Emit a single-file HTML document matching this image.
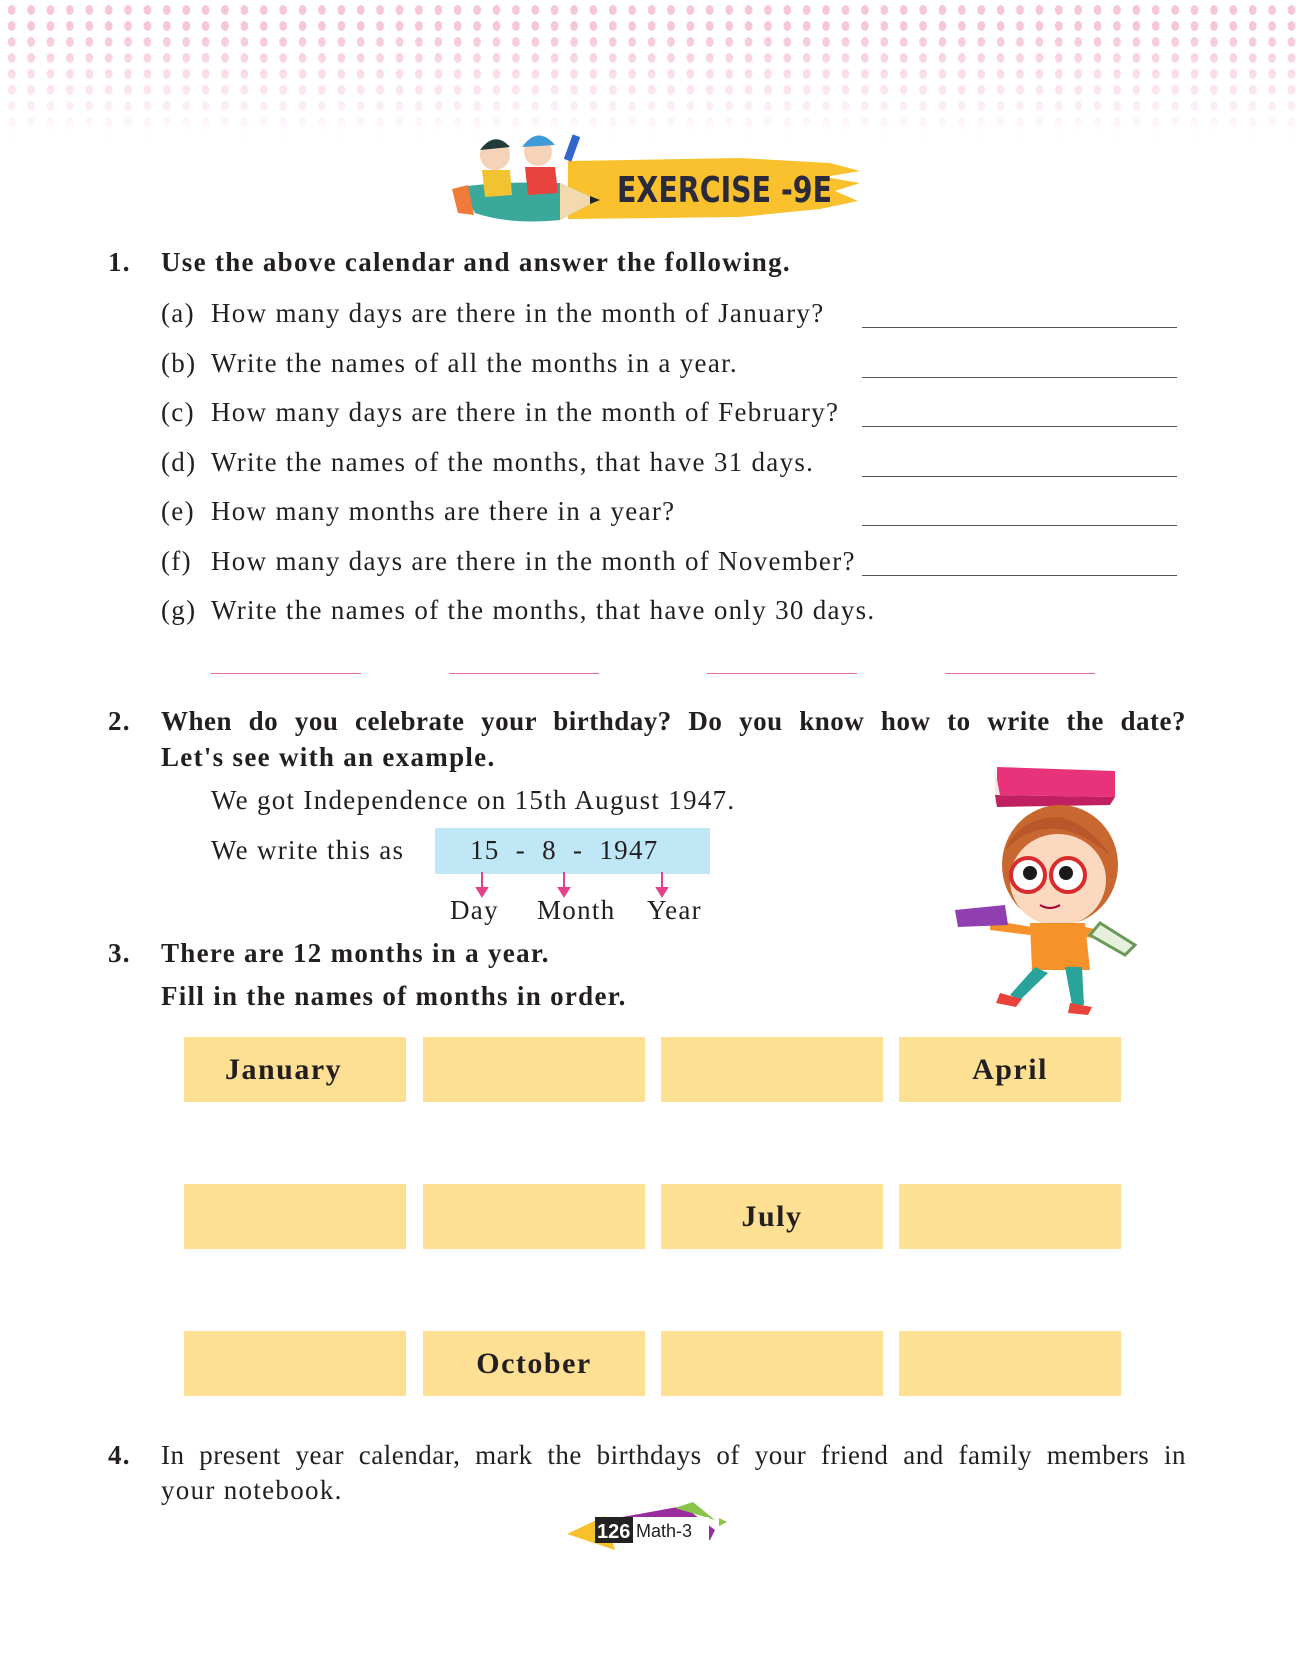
<!DOCTYPE html>
<html><head><meta charset="utf-8"><style>
body{margin:0;width:1296px;height:1656px;background:#fff;position:relative;overflow:hidden;font-family:"Liberation Serif",serif;color:#231f20}
.dots{position:absolute;left:0;top:0;width:1296px;height:140px;background-image:radial-gradient(ellipse 4px 5px at 50% 50%,#f6c6da 95%,transparent 100%);background-size:19.4px 16px;background-position:2px 2px;-webkit-mask-image:linear-gradient(#000 20%,rgba(0,0,0,0) 100%);mask-image:linear-gradient(#000 20%,rgba(0,0,0,0) 100%)}
.t{position:absolute;white-space:nowrap;font-size:27px;line-height:30px;letter-spacing:1.3px}
.b{font-weight:bold}
.ln{position:absolute;height:0;border-top:1.5px solid #555;left:862px;width:315px}
.pl{position:absolute;top:673px;height:0;border-top:1.5px solid #e26aa3;width:150px}
.box{position:absolute;box-sizing:border-box;width:222px;height:65px;background:#fde094;font-weight:bold;font-size:30px;line-height:65px;text-align:center;letter-spacing:1.5px}
</style></head><body>
<div class="dots"></div>
<svg style="position:absolute;left:440px;top:125px" width="440" height="110" viewBox="0 0 440 110">
<path d="M128 36 L300 33 L390 38 L420 46 L385 52 L420 58 L395 66 L418 76 L380 84 L300 92 L128 94 Z" fill="#f9c12e"/>
<path d="M20 62 Q60 56 120 58 L158 75 L120 95 Q70 100 35 88 Z" fill="#3aa99b"/>
<path d="M120 58 L158 75 L120 95 Z" fill="#f2d9ae"/>
<path d="M150 71 L160 75 L150 79Z" fill="#222"/>
<path d="M12 64 L28 60 L34 90 L18 88Z" fill="#f07a3a"/>
<circle cx="55" cy="30" r="15" fill="#f6d2b8"/><path d="M40 25 Q55 5 70 22 Z" fill="#1f3b3a"/>
<path d="M42 45 L70 45 L72 70 L45 72Z" fill="#f2c330"/>
<circle cx="98" cy="27" r="14" fill="#f6d2b8"/><path d="M82 22 Q98 0 115 20 Z" fill="#3f9ad8"/>
<path d="M85 42 L115 42 L118 68 L88 70Z" fill="#e8443f"/>
<rect x="128" y="10" width="8" height="26" fill="#3366cc" transform="rotate(20 132 23)"/>
<text x="177" y="77" font-family="DejaVu Sans Condensed, Liberation Sans, sans-serif" font-weight="bold" font-size="36" fill="#2a2a3a" textLength="215" lengthAdjust="spacingAndGlyphs">EXERCISE -9E</text>
</svg>

<div class="t b" style="left:108px;top:247px">1.</div>
<div class="t b" style="left:161px;top:247px">Use the above calendar and answer the following.</div>

<div class="t" style="left:161px;top:298px">(a)</div><div class="t" style="left:211px;top:298px">How many days are there in the month of January?</div>
<div class="t" style="left:161px;top:348px">(b)</div><div class="t" style="left:211px;top:348px">Write the names of all the months in a year.</div>
<div class="t" style="left:161px;top:397px">(c)</div><div class="t" style="left:211px;top:397px">How many days are there in the month of February?</div>
<div class="t" style="left:161px;top:447px">(d)</div><div class="t" style="left:211px;top:447px">Write the names of the months, that have 31 days.</div>
<div class="t" style="left:161px;top:496px">(e)</div><div class="t" style="left:211px;top:496px">How many months are there in a year?</div>
<div class="t" style="left:161px;top:546px">(f)</div><div class="t" style="left:211px;top:546px">How many days are there in the month of November?</div>
<div class="t" style="left:161px;top:595px">(g)</div><div class="t" style="left:211px;top:595px">Write the names of the months, that have only 30 days.</div>

<div class="ln" style="top:327px"></div><div class="ln" style="top:377px"></div><div class="ln" style="top:426px"></div><div class="ln" style="top:476px"></div><div class="ln" style="top:525px"></div><div class="ln" style="top:575px"></div>

<div class="pl" style="left:211px"></div><div class="pl" style="left:449px"></div><div class="pl" style="left:707px"></div><div class="pl" style="left:945px"></div>

<div class="t b" style="left:108px;top:706px">2.</div>
<div class="t b" style="left:161px;top:706px;width:1025px;text-align:justify;text-align-last:justify;white-space:normal;letter-spacing:0.5px">When do you celebrate your birthday? Do you know how to write the date?</div>
<div class="t b" style="left:161px;top:742px">Let's see with an example.</div>
<div class="t" style="left:211px;top:785px">We got Independence on 15th August 1947.</div>
<div class="t" style="left:211px;top:835px">We write this as</div>
<div style="position:absolute;left:435px;top:828px;width:275px;height:46px;background:#bfe7f6"></div>
<div class="t" style="left:470px;top:835px">15 &nbsp;- &nbsp;8 &nbsp;- &nbsp;1947</div>
<svg style="position:absolute;left:435px;top:872px" width="275" height="26"><g stroke="#e5408a" stroke-width="2" fill="#e5408a"><line x1="47" y1="0" x2="47" y2="18"/><path d="M42 16 L52 16 L47 24Z"/><line x1="129" y1="0" x2="129" y2="18"/><path d="M124 16 L134 16 L129 24Z"/><line x1="227" y1="0" x2="227" y2="18"/><path d="M222 16 L232 16 L227 24Z"/></g></svg>
<div class="t" style="left:450px;top:895px">Day</div><div class="t" style="left:537px;top:895px">Month</div><div class="t" style="left:647px;top:895px">Year</div>

<svg style="position:absolute;left:950px;top:755px" width="190" height="260" viewBox="0 0 190 260">
<path d="M47 12 L165 16 L165 42 L47 40Z" fill="#e8327a"/><path d="M45 14 L50 40 L48 52 L45 48Z" fill="#f3e9dc"/><path d="M45 40 L165 42 L160 50 L47 52Z" fill="#c02060"/>
<ellipse cx="110" cy="110" rx="58" ry="60" fill="#c8672f"/>
<ellipse cx="108" cy="125" rx="48" ry="46" fill="#fbd8c0"/>
<path d="M55 95 Q100 50 160 100 Q140 70 110 62 Q70 62 55 95Z" fill="#b8582a"/>
<circle cx="78" cy="120" r="17" fill="#fff" stroke="#d82b2b" stroke-width="4"/><circle cx="118" cy="120" r="17" fill="#fff" stroke="#d82b2b" stroke-width="4"/>
<circle cx="80" cy="118" r="7" fill="#1a1a1a"/><circle cx="116" cy="118" r="7" fill="#1a1a1a"/>
<path d="M90 150 Q100 156 110 150" stroke="#a03" stroke-width="2" fill="none"/>
<path d="M80 168 L135 168 L140 215 L82 215Z" fill="#f7922a"/>
<path d="M40 165 L82 172 L80 180 L40 175Z" fill="#f7922a"/><path d="M135 172 L165 178 L165 186 L135 182Z" fill="#f7922a"/>
<path d="M5 155 L55 150 L58 170 L8 172Z" fill="#8f3fb0"/><path d="M150 168 L185 190 L175 200 L140 180Z" fill="#e6f0dc" stroke="#6a9a5a" stroke-width="3"/>
<path d="M85 212 L60 240 L70 245 L98 218Z" fill="#2aa39b"/><path d="M115 212 L122 250 L134 250 L132 212Z" fill="#2aa39b"/>
<path d="M50 238 L72 244 L66 252 L46 248Z" fill="#e8423a"/><path d="M120 248 L142 252 L138 260 L118 258Z" fill="#e8423a"/>
</svg>

<div class="t b" style="left:108px;top:938px">3.</div>
<div class="t b" style="left:161px;top:938px">There are 12 months in a year.</div>
<div class="t b" style="left:161px;top:981px">Fill in the names of months in order.</div>

<div class="box" style="left:184px;top:1037px;text-align:left;padding-left:41px">January</div>
<div class="box" style="left:423px;top:1037px"></div>
<div class="box" style="left:661px;top:1037px"></div>
<div class="box" style="left:899px;top:1037px">April</div>
<div class="box" style="left:184px;top:1184px"></div>
<div class="box" style="left:423px;top:1184px"></div>
<div class="box" style="left:661px;top:1184px">July</div>
<div class="box" style="left:899px;top:1184px"></div>
<div class="box" style="left:184px;top:1331px"></div>
<div class="box" style="left:423px;top:1331px">October</div>
<div class="box" style="left:661px;top:1331px"></div>
<div class="box" style="left:899px;top:1331px"></div>

<div class="t b" style="left:108px;top:1440px">4.</div>
<div class="t" style="left:161px;top:1440px;width:1025px;text-align:justify;text-align-last:justify;white-space:normal;letter-spacing:0.5px">In present year calendar, mark the birthdays of your friend and family members in</div>
<div class="t" style="left:161px;top:1475px">your notebook.</div>

<svg style="position:absolute;left:565px;top:1500px" width="170" height="55" viewBox="0 0 170 55">
<path d="M2 34 L40 16 L50 50Z" fill="#f6c12b"/>
<path d="M30 22 L118 6 L150 30 L145 40 L40 42Z" fill="#9a2d9e"/>
<path d="M110 8 L128 2 L150 20Z" fill="#8bc34a"/><path d="M154 18 L162 22 L154 26Z" fill="#8bc34a"/>
<rect x="30" y="17" width="38" height="26" fill="#222"/>
<rect x="68" y="17" width="76" height="26" fill="#fff"/>
<text x="32" y="38" font-family="Liberation Sans,sans-serif" font-weight="bold" font-size="20" fill="#fff">126</text>
<text x="71" y="37" font-family="Liberation Sans,sans-serif" font-size="18" fill="#222">Math-3</text>
</svg>
</body></html>
